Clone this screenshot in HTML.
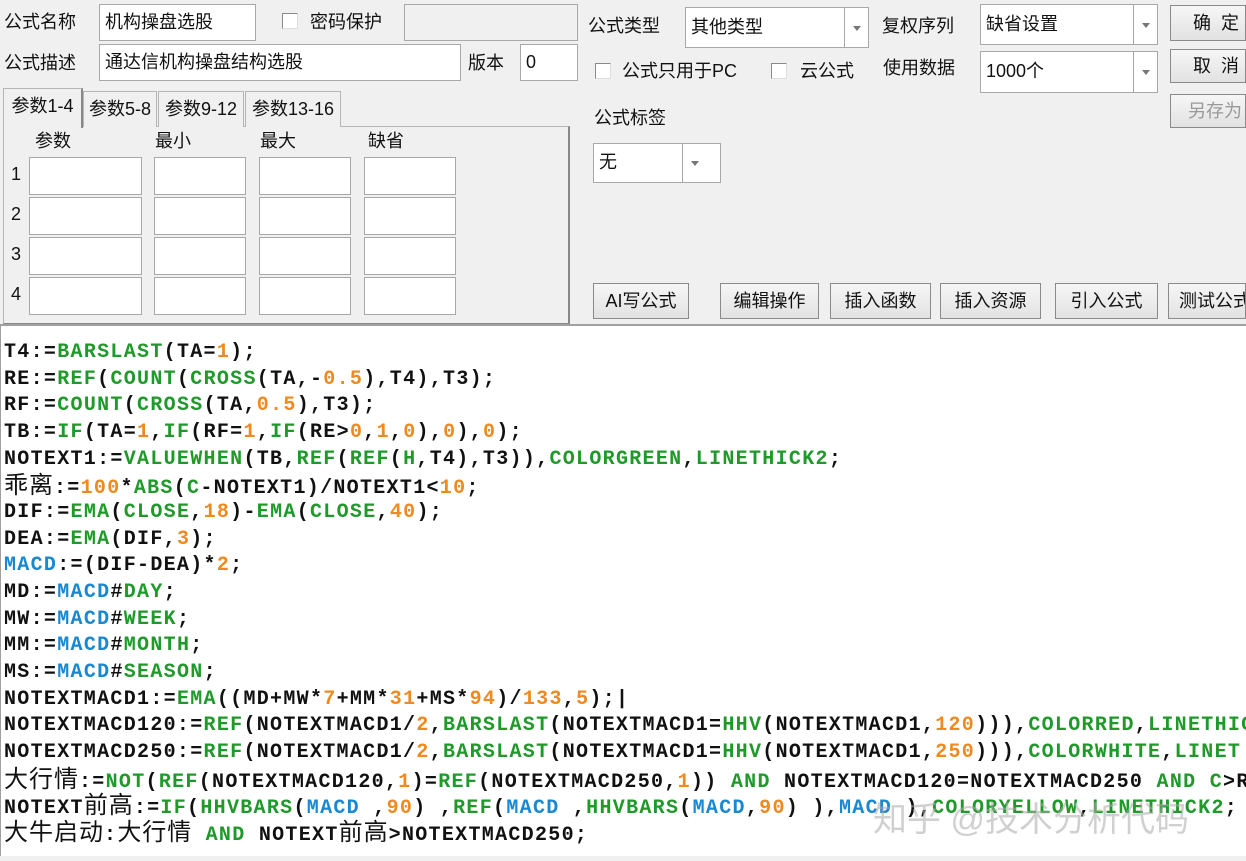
<!DOCTYPE html><html><head><meta charset="utf-8"><style>
*{margin:0;padding:0;box-sizing:border-box}
body{width:1246px;height:861px;background:#f0f0f0;position:relative;overflow:hidden;font-family:"Liberation Sans","Noto Sans CJK SC",sans-serif;font-size:18px;color:#111}
.a{position:absolute}
.inp{position:absolute;background:#fff;border:1px solid #a8a8a8;padding:2px 5px;line-height:30px;white-space:nowrap;overflow:hidden}
.lbl{position:absolute;white-space:nowrap;line-height:24px}
.cb{position:absolute;width:16px;height:16px;background:#fff;border:1px solid #8a8a8a;border-right-color:#ddd;border-bottom-color:#ddd}
.dd{position:absolute;top:0;bottom:0;right:0;width:24px;border-left:1px solid #a8a8a8}
.dd:after{content:"";position:absolute;left:8px;top:50%;margin-top:-2px;border:4px solid transparent;border-top:5px solid #777}
.btn{position:absolute;border:1px solid #8a8a8a;background:linear-gradient(#f6f6f6,#e2e2e2);text-align:center;white-space:nowrap;overflow:hidden;font-size:18px}
.cell{position:absolute;background:#fff;border:1px solid #a8a8a8;height:38px}
.tab{position:absolute;border:1px solid #b5b5b5;border-bottom:none;background:#f0f0f0;text-align:center;line-height:34px;font-size:18px}
#code{position:absolute;left:0;top:324px;width:1246px;height:532px;background:#fff;border-top:2px solid #a0a0a0;border-left:1px solid #a0a0a0;overflow:hidden}
.l{position:absolute;left:3px;white-space:pre;font-family:"Liberation Mono",monospace;font-weight:bold;font-size:20px;letter-spacing:1.3px;line-height:26px;color:#111}
.g{color:#1f9a2a}.o{color:#f08a1e}.b{color:#1a88d0}
.c{font-family:"Liberation Sans","Noto Sans CJK SC",sans-serif;font-weight:normal;font-size:24px;letter-spacing:1px}
</style></head><body>
<div class="lbl" style="left:4px;top:10px">公式名称</div>
<div class="inp" style="left:99px;top:4px;width:157px;height:37px">机构操盘选股</div>
<div class="cb" style="left:282px;top:13px"></div>
<div class="lbl" style="left:310px;top:10px">密码保护</div>
<div class="inp" style="left:404px;top:4px;width:174px;height:37px;background:#f0f0f0"></div>
<div class="lbl" style="left:4px;top:51px">公式描述</div>
<div class="inp" style="left:99px;top:44px;width:362px;height:37px">通达信机构操盘结构选股</div>
<div class="lbl" style="left:468px;top:51px">版本</div>
<div class="inp" style="left:520px;top:44px;width:58px;height:37px">0</div>

<div class="a" style="left:3px;top:126px;width:567px;height:199px;border:1px solid #b5b5b5;border-right:2px solid #888;border-bottom:2px solid #888"></div>
<div class="tab" style="left:83px;top:91px;width:74px;height:36px">参数5-8</div>
<div class="tab" style="left:158px;top:91px;width:86px;height:36px">参数9-12</div>
<div class="tab" style="left:245px;top:91px;width:96px;height:36px">参数13-16</div>
<div class="tab" style="left:3px;top:88px;width:80px;height:40px;border-right:2px solid #888;line-height:34px">参数1-4</div>
<div class="lbl" style="left:35px;top:129px">参数</div>
<div class="lbl" style="left:155px;top:129px">最小</div>
<div class="lbl" style="left:260px;top:129px">最大</div>
<div class="lbl" style="left:368px;top:129px">缺省</div>
<div class="lbl" style="left:11px;top:162px">1</div><div class="lbl" style="left:11px;top:202px">2</div><div class="lbl" style="left:11px;top:242px">3</div><div class="lbl" style="left:11px;top:282px">4</div>
<div class="cell" style="left:29px;top:157px;width:113px"></div><div class="cell" style="left:154px;top:157px;width:92px"></div><div class="cell" style="left:259px;top:157px;width:92px"></div><div class="cell" style="left:364px;top:157px;width:92px"></div>
<div class="cell" style="left:29px;top:197px;width:113px"></div><div class="cell" style="left:154px;top:197px;width:92px"></div><div class="cell" style="left:259px;top:197px;width:92px"></div><div class="cell" style="left:364px;top:197px;width:92px"></div>
<div class="cell" style="left:29px;top:237px;width:113px"></div><div class="cell" style="left:154px;top:237px;width:92px"></div><div class="cell" style="left:259px;top:237px;width:92px"></div><div class="cell" style="left:364px;top:237px;width:92px"></div>
<div class="cell" style="left:29px;top:277px;width:113px"></div><div class="cell" style="left:154px;top:277px;width:92px"></div><div class="cell" style="left:259px;top:277px;width:92px"></div><div class="cell" style="left:364px;top:277px;width:92px"></div>

<div class="lbl" style="left:588px;top:14px">公式类型</div>
<div class="inp" style="left:685px;top:7px;width:184px;height:41px;line-height:34px">其他类型<div class="dd"></div></div>
<div class="lbl" style="left:882px;top:14px">复权序列</div>
<div class="inp" style="left:980px;top:4px;width:178px;height:41px;line-height:34px">缺省设置<div class="dd"></div></div>
<div class="btn" style="left:1170px;top:5px;width:76px;height:36px;line-height:34px;text-align:left;padding-left:22px">确&nbsp; 定</div>
<div class="btn" style="left:1170px;top:49px;width:76px;height:34px;line-height:32px;text-align:left;padding-left:22px">取&nbsp; 消</div>
<div class="btn" style="left:1170px;top:94px;width:76px;height:34px;line-height:32px;color:#999;text-align:left;padding-left:17px">另存为</div>
<div class="cb" style="left:595px;top:63px"></div>
<div class="lbl" style="left:622px;top:59px">公式只用于PC</div>
<div class="cb" style="left:771px;top:63px"></div>
<div class="lbl" style="left:800px;top:59px">云公式</div>
<div class="lbl" style="left:883px;top:56px">使用数据</div>
<div class="inp" style="left:980px;top:51px;width:178px;height:42px;line-height:34px">1000个<div class="dd"></div></div>
<div class="lbl" style="left:594px;top:106px">公式标签</div>
<div class="inp" style="left:593px;top:143px;width:128px;height:40px;line-height:32px">无<div class="dd" style="width:38px"></div></div>
<div class="btn" style="left:593px;top:283px;width:96px;height:36px;line-height:34px">AI写公式</div>
<div class="btn" style="left:720px;top:283px;width:99px;height:36px;line-height:34px">编辑操作</div>
<div class="btn" style="left:830px;top:283px;width:101px;height:36px;line-height:34px">插入函数</div>
<div class="btn" style="left:940px;top:283px;width:101px;height:36px;line-height:34px">插入资源</div>
<div class="btn" style="left:1055px;top:283px;width:103px;height:36px;line-height:34px">引入公式</div>
<div class="btn" style="left:1168px;top:283px;width:78px;height:36px;line-height:34px;text-align:left;padding-left:10px">测试公式</div>

<div id="code">
<div class="l" style="top:14px">T4:=<span class="g">BARSLAST</span>(TA=<span class="o">1</span>);</div>
<div class="l" style="top:41px">RE:=<span class="g">REF</span>(<span class="g">COUNT</span>(<span class="g">CROSS</span>(TA,-<span class="o">0.5</span>),T4),T3);</div>
<div class="l" style="top:67px">RF:=<span class="g">COUNT</span>(<span class="g">CROSS</span>(TA,<span class="o">0.5</span>),T3);</div>
<div class="l" style="top:94px">TB:=<span class="g">IF</span>(TA=<span class="o">1</span>,<span class="g">IF</span>(RF=<span class="o">1</span>,<span class="g">IF</span>(RE&gt;<span class="o">0</span>,<span class="o">1</span>,<span class="o">0</span>),<span class="o">0</span>),<span class="o">0</span>);</div>
<div class="l" style="top:121px">NOTEXT1:=<span class="g">VALUEWHEN</span>(TB,<span class="g">REF</span>(<span class="g">REF</span>(<span class="g">H</span>,T4),T3)),<span class="g">COLORGREEN</span>,<span class="g">LINETHICK2</span>;</div>
<div class="l" style="top:147px"><span class="c">乖离</span>:=<span class="o">100</span>*<span class="g">ABS</span>(<span class="g">C</span>-NOTEXT1)/NOTEXT1&lt;<span class="o">10</span>;</div>
<div class="l" style="top:174px">DIF:=<span class="g">EMA</span>(<span class="g">CLOSE</span>,<span class="o">18</span>)-<span class="g">EMA</span>(<span class="g">CLOSE</span>,<span class="o">40</span>);</div>
<div class="l" style="top:201px">DEA:=<span class="g">EMA</span>(DIF,<span class="o">3</span>);</div>
<div class="l" style="top:227px"><span class="b">MACD</span>:=(DIF-DEA)*<span class="o">2</span>;</div>
<div class="l" style="top:254px">MD:=<span class="b">MACD</span>#<span class="g">DAY</span>;</div>
<div class="l" style="top:281px">MW:=<span class="b">MACD</span>#<span class="g">WEEK</span>;</div>
<div class="l" style="top:307px">MM:=<span class="b">MACD</span>#<span class="g">MONTH</span>;</div>
<div class="l" style="top:334px">MS:=<span class="b">MACD</span>#<span class="g">SEASON</span>;</div>
<div class="l" style="top:361px">NOTEXTMACD1:=<span class="g">EMA</span>((MD+MW*<span class="o">7</span>+MM*<span class="o">31</span>+MS*<span class="o">94</span>)/<span class="o">133</span>,<span class="o">5</span>);|</div>
<div class="l" style="top:387px">NOTEXTMACD120:=<span class="g">REF</span>(NOTEXTMACD1/<span class="o">2</span>,<span class="g">BARSLAST</span>(NOTEXTMACD1=<span class="g">HHV</span>(NOTEXTMACD1,<span class="o">120</span>))),<span class="g">COLORRED</span>,<span class="g">LINETHIC</span></div>
<div class="l" style="top:414px">NOTEXTMACD250:=<span class="g">REF</span>(NOTEXTMACD1/<span class="o">2</span>,<span class="g">BARSLAST</span>(NOTEXTMACD1=<span class="g">HHV</span>(NOTEXTMACD1,<span class="o">250</span>))),<span class="g">COLORWHITE</span>,<span class="g">LINET</span></div>
<div class="l" style="top:441px"><span class="c">大行情</span>:=<span class="g">NOT</span>(<span class="g">REF</span>(NOTEXTMACD120,<span class="o">1</span>)=<span class="g">REF</span>(NOTEXTMACD250,<span class="o">1</span>)) <span class="g">AND</span> NOTEXTMACD120=NOTEXTMACD250 <span class="g">AND</span> <span class="g">C</span>&gt;R</div>
<div class="l" style="top:467px">NOTEXT<span class="c">前高</span>:=<span class="g">IF</span>(<span class="g">HHVBARS</span>(<span class="b">MACD</span> ,<span class="o">90</span>) ,<span class="g">REF</span>(<span class="b">MACD</span> ,<span class="g">HHVBARS</span>(<span class="b">MACD</span>,<span class="o">90</span>) ),<span class="b">MACD</span> ),<span class="g">COLORYELLOW</span>,<span class="g">LINETHICK2</span>;</div>
<div class="l" style="top:494px"><span class="c">大牛启动</span>:<span class="c">大行情</span> <span class="g">AND</span> NOTEXT<span class="c">前高</span>&gt;NOTEXTMACD250;</div>
<div class="a" style="left:872px;top:466px;font-size:34px;color:rgba(170,170,170,0.55);white-space:nowrap;font-family:'Liberation Sans','Noto Sans CJK SC',sans-serif">知乎 @技术分析代码</div>
</div>
</body></html>
